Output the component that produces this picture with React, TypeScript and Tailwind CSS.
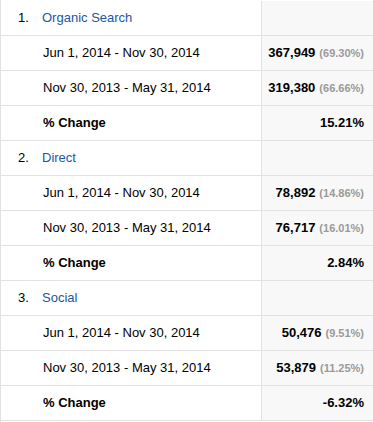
import React from 'react';

type Row = {
  label: string;
  value: string;
  share?: string;
};

type Group = {
  rank: number;
  name: string;
  rows: Row[];
  change: string;
};

const groups: Group[] = [
  {
    rank: 1,
    name: 'Organic Search',
    rows: [
      { label: 'Jun 1, 2014 - Nov 30, 2014', value: '367,949', share: '(69.30%)' },
      { label: 'Nov 30, 2013 - May 31, 2014', value: '319,380', share: '(66.66%)' },
    ],
    change: '15.21%',
  },
  {
    rank: 2,
    name: 'Direct',
    rows: [
      { label: 'Jun 1, 2014 - Nov 30, 2014', value: '78,892', share: '(14.86%)' },
      { label: 'Nov 30, 2013 - May 31, 2014', value: '76,717', share: '(16.01%)' },
    ],
    change: '2.84%',
  },
  {
    rank: 3,
    name: 'Social',
    rows: [
      { label: 'Jun 1, 2014 - Nov 30, 2014', value: '50,476', share: '(9.51%)' },
      { label: 'Nov 30, 2013 - May 31, 2014', value: '53,879', share: '(11.25%)' },
    ],
    change: '-6.32%',
  },
];

const rowCls = 'flex h-[35px] border-b border-[#e2e2e2]';
const leftCls = 'flex-1 flex items-center border-r border-[#e2e2e2]';
const rightCls = 'w-[111px] flex items-center justify-end pr-[9px] bg-[#f8f8f8]';

export default function App() {
  return (
    <div
      className="w-[373px] h-[422px] bg-white border-l border-[#e2e2e2] text-[13px] text-black overflow-hidden"
      style={{ fontFamily: '"Liberation Sans", Arial, sans-serif' }}
    >
      {groups.map((g, gi) => (
        <div key={g.rank}>
          {/* ligne de canal */}
          <div className={`${rowCls} ${gi === 0 ? 'h-[36px] pt-px' : ''}`}>
            <div className={leftCls}>
              <span className="w-[24px] pl-[17px] box-content">{g.rank}.</span>
              <span className="text-[#21579f]">{g.name}</span>
            </div>
            <div className={rightCls} />
          </div>

          {g.rows.map((r) => (
            <div key={r.label} className={rowCls}>
              <div className={`${leftCls} pl-[42px]`}>{r.label}</div>
              <div className={rightCls}>
                <span className="font-bold">{r.value}</span>
                <span className="ml-[4px] text-[11px] font-bold text-[#9a9a9a]">{r.share}</span>
              </div>
            </div>
          ))}

          <div className={rowCls}>
            <div className={`${leftCls} pl-[42px] font-bold`}>% Change</div>
            <div className={`${rightCls} font-bold`}>{g.change}</div>
          </div>
        </div>
      ))}
    </div>
  );
}
